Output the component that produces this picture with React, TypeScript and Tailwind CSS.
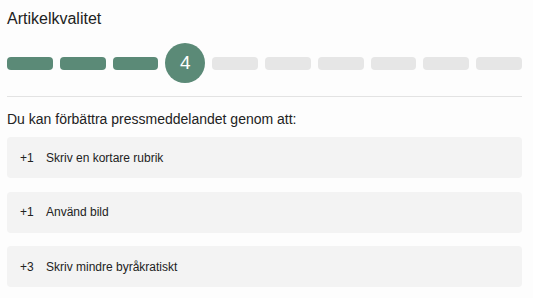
const suggestions = [
  { points: 1, label: "Skriv en kortare rubrik" },
  { points: 1, label: "Använd bild" },
  { points: 3, label: "Skriv mindre byråkratiskt" },
];

const score = 4;
const total = 10;

export default function App() {
  const steps = Array.from({ length: total }, (_, i) => i + 1);

  return (
    <div className="min-h-screen bg-[#fdfdfd] pl-[7px] pr-[11px] pt-[10px] font-['Liberation_Sans',Arial,sans-serif] text-[#222]">
      <h2 className="text-[16px] leading-[18px]">Artikelkvalitet</h2>

      <div className="mt-[15px] flex items-center gap-[7px]">
        {steps.map((step) =>
          step === score ? (
            <div
              key={step}
              className="flex h-[40px] w-[40px] shrink-0 items-center justify-center rounded-full bg-[#5b8a77] text-[19px] text-white"
            >
              {step}
            </div>
          ) : (
            <div
              key={step}
              className={
                step < score
                  ? "h-[13px] flex-1 rounded-[4px] bg-[#5b8a77]"
                  : "h-[13px] flex-1 rounded-[4px] bg-[#e6e6e6]"
              }
            />
          )
        )}
      </div>

      <div className="mt-[13px] border-t border-[#e3e3e3]" />

      <p className="mt-[14px] text-[14px] leading-[16px] text-[#222]">
        Du kan förbättra pressmeddelandet genom att:
      </p>

      <ul className="mt-[10px] space-y-[13.5px]">
        {suggestions.map((s) => (
          <li
            key={s.label}
            className="flex h-[41px] items-center rounded-[4px] bg-[#f3f3f3] px-[13px] text-[12px] text-[#222]"
          >
            <span className="w-[26px]">+{s.points}</span>
            <span>{s.label}</span>
          </li>
        ))}
      </ul>
    </div>
  );
}
